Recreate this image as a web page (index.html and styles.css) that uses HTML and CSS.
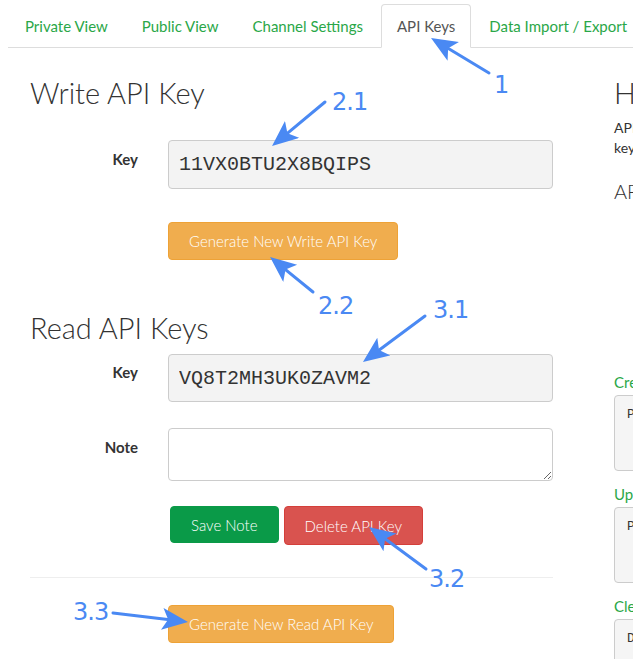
FILE: index.html
```html
<!DOCTYPE html>
<html lang="en">
<head>
<meta charset="utf-8">
<title>API Keys</title>
<link rel="stylesheet" href="styles.css">
</head>
<body>
<div class="page">
  <ul class="tabs">
    <li><a href="#">Private View</a></li>
    <li><a href="#">Public View</a></li>
    <li><a href="#">Channel Settings</a></li>
    <li class="active"><a href="#">API Keys</a></li>
    <li><a href="#">Data Import / Export</a></li>
  </ul>

  <div class="content">
    <div class="left">
      <h2 class="title title-write">Write API Key</h2>
      <div class="form-row row-wkey">
        <label class="lbl">Key</label>
        <div class="field"><input class="key" type="text" value="11VX0BTU2X8BQIPS" readonly></div>
      </div>
      <div class="form-row row-wbtn">
        <span></span>
        <div class="field"><button class="btn btn-warn">Generate New Write API Key</button></div>
      </div>

      <h2 class="title title-read">Read API Keys</h2>
      <div class="form-row row-rkey">
        <label class="lbl">Key</label>
        <div class="field"><input class="key" type="text" value="VQ8T2MH3UK0ZAVM2" readonly></div>
      </div>
      <div class="form-row row-note">
        <label class="lbl">Note</label>
        <div class="field"><textarea class="note"></textarea></div>
      </div>
      <div class="form-row row-actions">
        <span></span>
        <div class="field actions">
          <button class="btn btn-save">Save Note</button>
          <button class="btn btn-del">Delete API Key</button>
        </div>
      </div>
      <hr class="sep">
      <div class="form-row row-rbtn">
        <span></span>
        <div class="field"><button class="btn btn-warn">Generate New Read API Key</button></div>
      </div>
    </div>

    <div class="right">
      <h2 class="title title-help">Help</h2>
      <p class="help-text">API keys enable you to write data to a channel or read data from a private channel. API<br>keys are auto-generated when you create a new channel.</p>
      <h3 class="sub">API Keys Settings</h3>
      <div class="req req-first">
        <div class="req-label">Create a Channel</div>
        <pre class="req-code">POST https://api.thingspeak.com/channels.json
     api_key=XXXXXXXXXXXXXXXX
     name=My New Channel</pre>
      </div>
      <div class="req">
        <div class="req-label">Update a Channel</div>
        <pre class="req-code">PUT https://api.thingspeak.com/channels/CHANNEL_ID.json
     api_key=XXXXXXXXXXXXXXXX
     name=Updated Channel</pre>
      </div>
      <div class="req">
        <div class="req-label">Clear a Channel</div>
        <pre class="req-code">DELETE https://api.thingspeak.com/channels/CHANNEL_ID/feeds.json
     api_key=XXXXXXXXXXXXXXXX</pre>
      </div>
    </div>
  </div>

  <svg class="annot" width="633" height="659" viewBox="0 0 633 659" xmlns="http://www.w3.org/2000/svg">
    <defs>
      <marker id="ah" markerUnits="userSpaceOnUse" markerWidth="28" markerHeight="24" refX="12" refY="11" orient="auto">
        <path d="M0,0 L26,11 L0,22 L6,11 Z" fill="#4a89f3"/>
      </marker>
    </defs>
    <g stroke="#4a89f3" stroke-width="3" stroke-linecap="round" fill="none">
      <line x1="489" y1="73" x2="443" y2="45.2" marker-end="url(#ah)"/>
      <line x1="325" y1="102" x2="282.8" y2="137.1" marker-end="url(#ah)"/>
      <line x1="313" y1="292" x2="280.9" y2="265.8" marker-end="url(#ah)"/>
      <line x1="425" y1="316" x2="374.2" y2="353.7" marker-end="url(#ah)"/>
      <line x1="426" y1="569" x2="380.3" y2="535.3" marker-end="url(#ah)"/>
      <line x1="113" y1="613" x2="174.1" y2="620.3" marker-end="url(#ah)"/>
    </g>
    <g class="annot-text">
      <text x="494" y="93">1</text>
      <text x="332" y="110">2.1</text>
      <text x="318" y="314">2.2</text>
      <text x="433" y="318">3.1</text>
      <text x="429" y="587">3.2</text>
      <text x="73" y="620">3.3</text>
    </g>
  </svg>
</div>
</body>
</html>
```

FILE: styles.css
```css
html, body {
  margin: 0;
  padding: 0;
  overflow: hidden;
  background: #fff;
}

body {
  font-family: Lato, "Noto Sans", sans-serif;
  color: #333;
}

.page {
  position: relative;
  width: 633px;
  height: 659px;
  overflow: hidden;
}

/* Tabs */
.tabs {
  list-style: none;
  margin: 4px 0 0 8px;
  padding: 0 0 0 1px;
  display: flex;
  border-bottom: 1px solid #ddd;
  width: 900px;
}

.tabs li {
  margin: 0 2px -1px 0;
}

.tabs a {
  display: block;
  padding: 11px 15px;
  line-height: 20px;
  font-size: 15px;
  color: #2aa748;
  text-decoration: none;
  border: 1px solid transparent;
  border-radius: 4px 4px 0 0;
  white-space: nowrap;
}

.tabs .active a {
  color: #555;
  background: #fff;
  border-color: #ddd;
  border-bottom-color: transparent;
}

/* Columns */
.content {
  display: flex;
  padding-left: 15px;
}

.left {
  flex: 0 0 523px;
  padding: 0 15px;
}

.right {
  flex: 0 0 560px;
  margin-left: 31px;
  padding: 0 15px;
}

/* Headings */
.title {
  margin: 0;
  font-size: 29px;
  line-height: 32px;
  font-weight: 300;
  color: #333;
  white-space: nowrap;
}

.title-write,
.title-help {
  margin-top: 29px;
}

.title-read {
  margin-top: 52px;
}

/* Form rows */
.form-row {
  display: grid;
  grid-template-columns: 123px 1fr;
}

.lbl {
  text-align: right;
  padding-right: 15px;
  font-weight: 700;
  font-size: 15px;
  line-height: 20px;
  padding-top: 9px;
}

.field {
  padding-left: 15px;
}

.row-wkey { margin-top: 31px; }
.row-wbtn { margin-top: 33px; }
.row-rkey { margin-top: 10px; }
.row-rkey .lbl { padding-top: 8px; }
.row-note { margin-top: 26px; }
.row-note .lbl { padding-top: 9px; }
.row-actions { margin-top: 25px; }
.row-rbtn { margin-top: 27px; }

.key {
  display: block;
  box-sizing: border-box;
  width: 100%;
  height: 49px;
  margin: 0;
  padding: 0 10px;
  border: 1px solid #ccc;
  border-radius: 4px;
  background: #f3f3f3;
  font-family: "Liberation Mono", monospace;
  font-size: 20px;
  color: #333;
  outline: none;
}

.row-rkey .key {
  height: 48px;
}

.note {
  display: block;
  box-sizing: border-box;
  width: 100%;
  height: 53px;
  margin: 0;
  padding: 6px 10px;
  border: 1px solid #ccc;
  border-radius: 4px;
  background: #fff;
  font-family: Lato, sans-serif;
  font-size: 15px;
  resize: vertical;
  outline: none;
}

/* Buttons */
.btn {
  display: inline-block;
  box-sizing: border-box;
  height: 38px;
  margin: 0;
  padding: 0 20px;
  border: 1px solid transparent;
  border-radius: 4px;
  font-family: Lato, sans-serif;
  font-weight: 300;
  font-size: 15px;
  color: #fff;
  cursor: pointer;
  white-space: nowrap;
}

.btn-warn {
  background: #f0ad4e;
  border-color: #eea236;
}

.actions {
  display: flex;
  align-items: flex-start;
  gap: 5px;
}

.btn-save {
  margin-left: 2px;
  height: 37px;
  background: #0a9a48;
  border-color: #0a9a48;
}

.btn-del {
  height: 39px;
  background: #d9534f;
  border-color: #d43f3a;
}

.sep {
  margin: 32px 0 0 0;
  border: 0;
  border-top: 1px solid #eee;
  height: 0;
}

/* Right column */
.help-text {
  margin: 9px 0 0 0;
  font-size: 14px;
  line-height: 20px;
  white-space: nowrap;
}

.sub {
  margin: 21px 0 0 0;
  font-size: 20px;
  line-height: 24px;
  font-weight: 300;
  white-space: nowrap;
}

.req {
  margin-top: 13px;
}

.req-first {
  margin-top: 169px;
}

.req-label {
  font-size: 15px;
  line-height: 20px;
  color: #2aa748;
  margin-bottom: 3px;
  white-space: nowrap;
}

.req-code {
  margin: 0;
  padding: 10px 12px;
  border: 1px solid #ccc;
  border-radius: 4px;
  background: #f5f5f5;
  font-family: "Liberation Mono", monospace;
  font-size: 13px;
  line-height: 18px;
  color: #333;
  white-space: pre;
  overflow: hidden;
}

/* Annotation overlay */
.annot {
  position: absolute;
  left: 0;
  top: 0;
  pointer-events: none;
}

.annot-text text {
  font-family: "DejaVu Sans", sans-serif;
  font-size: 24px;
  letter-spacing: -1px;
  fill: #4a89f3;
}
```
